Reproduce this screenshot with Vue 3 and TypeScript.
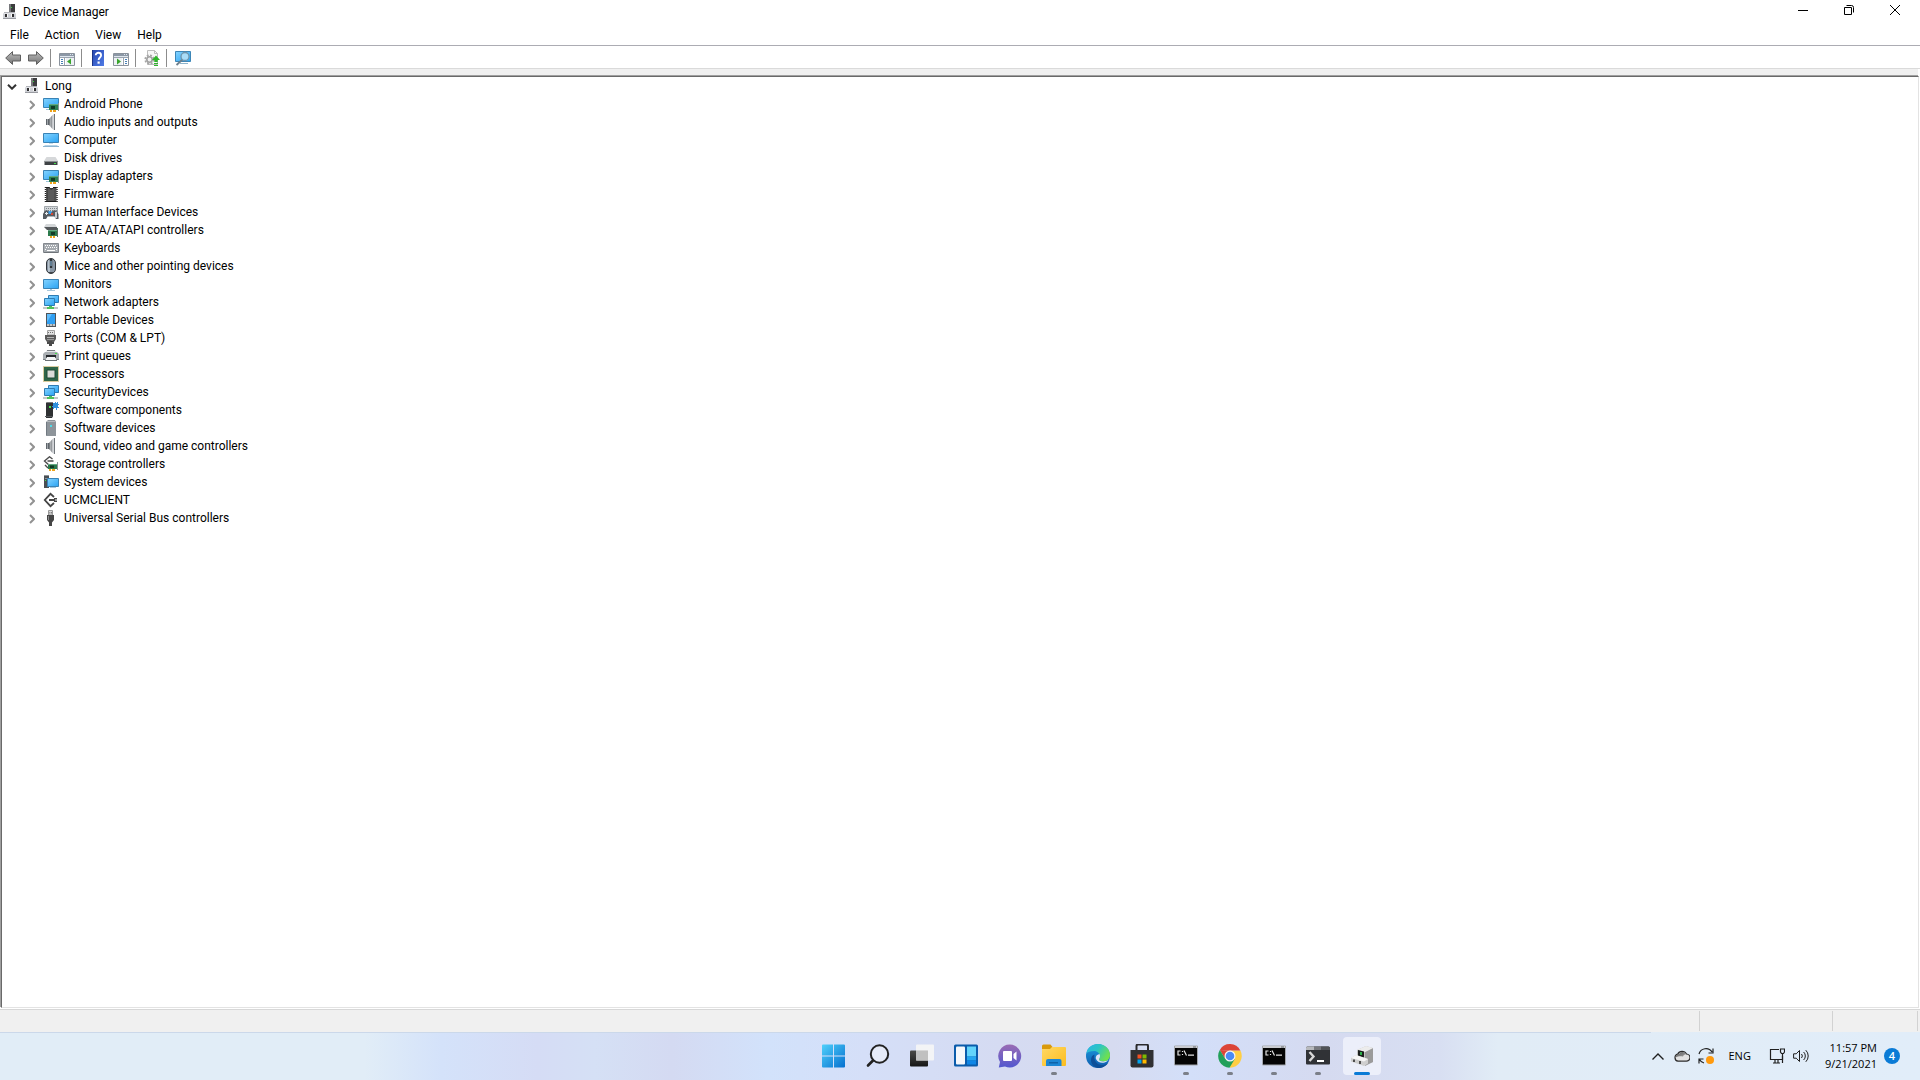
<script setup lang="ts">
interface Category {
  name: string
  icon: string
}

interface TaskItem {
  label: string
  icon: string
  running?: boolean
  active?: boolean
}

const menus: string[] = ['File', 'Action', 'View', 'Help']

const toolGroups: { label: string; icon: string }[][] = [
  [
    { label: 'Back', icon: 'back' },
    { label: 'Forward', icon: 'forward' },
  ],
  [{ label: 'Show/Hide Console Tree', icon: 'console-tree' }],
  [
    { label: 'Help', icon: 'help' },
    { label: 'Show/Hide Action Pane', icon: 'action-pane' },
  ],
  [{ label: 'Update device driver', icon: 'update' }],
  [{ label: 'Scan for hardware changes', icon: 'scan' }],
]

const categories: Category[] = [
  { name: 'Android Phone', icon: 'display' },
  { name: 'Audio inputs and outputs', icon: 'speaker' },
  { name: 'Computer', icon: 'computer' },
  { name: 'Disk drives', icon: 'disk' },
  { name: 'Display adapters', icon: 'display' },
  { name: 'Firmware', icon: 'firmware' },
  { name: 'Human Interface Devices', icon: 'hid' },
  { name: 'IDE ATA/ATAPI controllers', icon: 'ide' },
  { name: 'Keyboards', icon: 'keyboard' },
  { name: 'Mice and other pointing devices', icon: 'mouse' },
  { name: 'Monitors', icon: 'monitor' },
  { name: 'Network adapters', icon: 'network' },
  { name: 'Portable Devices', icon: 'portable' },
  { name: 'Ports (COM & LPT)', icon: 'port' },
  { name: 'Print queues', icon: 'printer' },
  { name: 'Processors', icon: 'cpu' },
  { name: 'SecurityDevices', icon: 'network' },
  { name: 'Software components', icon: 'component' },
  { name: 'Software devices', icon: 'softdev' },
  { name: 'Sound, video and game controllers', icon: 'speaker' },
  { name: 'Storage controllers', icon: 'storage' },
  { name: 'System devices', icon: 'system' },
  { name: 'UCMCLIENT', icon: 'ucm' },
  { name: 'Universal Serial Bus controllers', icon: 'usb' },
]

const tasks: TaskItem[] = [
  { label: 'Start', icon: 'start' },
  { label: 'Search', icon: 'search' },
  { label: 'Task View', icon: 'taskview' },
  { label: 'Widgets', icon: 'widgets' },
  { label: 'Chat', icon: 'chat' },
  { label: 'File Explorer', icon: 'explorer', running: true },
  { label: 'Microsoft Edge', icon: 'edge' },
  { label: 'Microsoft Store', icon: 'store' },
  { label: 'Command Prompt', icon: 'cmd', running: true },
  { label: 'Google Chrome', icon: 'chrome', running: true },
  { label: 'Command Prompt', icon: 'cmd', running: true },
  { label: 'Windows Terminal', icon: 'terminal', running: true },
  { label: 'Device Manager', icon: 'devmgr', running: true, active: true },
]
</script>

<template>
  <div class="screen">
    <svg class="sprites" width="0" height="0" aria-hidden="true">
      <defs>
        <linearGradient id="g-screen" x1="0" y1="0" x2="1" y2="1">
          <stop offset="0" stop-color="#84d3ff" />
          <stop offset="1" stop-color="#2aa3f3" />
        </linearGradient>
        <linearGradient id="g-grey" x1="0" y1="0" x2="1" y2="0">
          <stop offset="0" stop-color="#63676b" />
          <stop offset="0.5" stop-color="#b4b8bb" />
          <stop offset="1" stop-color="#6c7075" />
        </linearGradient>
        <linearGradient id="g-arrow" x1="0" y1="0" x2="0" y2="1">
          <stop offset="0" stop-color="#bcbcbc" />
          <stop offset="1" stop-color="#747474" />
        </linearGradient>
        <linearGradient id="g-help" x1="0" y1="0" x2="1" y2="1">
          <stop offset="0" stop-color="#2545ae" />
          <stop offset="1" stop-color="#4f7be6" />
        </linearGradient>
        <linearGradient id="g-start" x1="0" y1="0" x2="1" y2="1">
          <stop offset="0" stop-color="#4fd0fb" />
          <stop offset="1" stop-color="#0570cf" />
        </linearGradient>
        <linearGradient id="g-chat" x1="0" y1="0" x2="0" y2="1">
          <stop offset="0" stop-color="#9a6cb4" />
          <stop offset="1" stop-color="#5257cf" />
        </linearGradient>
        <linearGradient id="g-folder" x1="0" y1="0" x2="1" y2="1">
          <stop offset="0" stop-color="#ffd865" />
          <stop offset="1" stop-color="#fcbc1d" />
        </linearGradient>
        <linearGradient id="g-edge-top" x1="0" y1="0" x2="1" y2="0.5">
          <stop offset="0" stop-color="#2ab4e8" />
          <stop offset="0.5" stop-color="#2cc5c4" />
          <stop offset="1" stop-color="#6ee04f" />
        </linearGradient>
        <linearGradient id="g-edge-left" x1="0" y1="0" x2="0" y2="1">
          <stop offset="0" stop-color="#1c9de0" />
          <stop offset="1" stop-color="#0f5cae" />
        </linearGradient>
        <linearGradient id="g-view" x1="0" y1="0" x2="0" y2="1">
          <stop offset="0" stop-color="#4a4a48" />
          <stop offset="1" stop-color="#161616" />
        </linearGradient>
        <linearGradient id="g-cloud" x1="0" y1="0" x2="1" y2="1">
          <stop offset="0" stop-color="#5c5c5c" />
          <stop offset="1" stop-color="#a2a2a2" />
        </linearGradient>
      </defs>

      <symbol id="card" viewBox="0 0 16 16">
        <path d="M6 8h9v6H6z" fill="#2f8053" />
        <path d="M8 10h4v3H8z" fill="#123b27" />
        <path d="M6 8h9v1H6z" fill="#63a983" />
        <path d="M15 7h1v8h-1z" fill="#8a9494" />
        <path d="M7 14h2v2H7zM10 14h3v2h-3z" fill="#eda31b" />
      </symbol>

      <symbol id="devmgr16" viewBox="0 0 16 16">
        <path d="M7 0h6v9H7z" fill="#3c3c3e" />
        <path d="M7 0h2v8H7z" fill="#77787b" />
        <path d="M9 3h1v1H9z" fill="#34d03a" />
        <path d="M2 8h11v1H2z" fill="#b2b4b9" />
        <path d="M1 9h13v6H1z" fill="#cfd1d6" />
        <path d="M1 9h13v1H1z" fill="#e2e3e7" />
        <path d="M1 14h13v1H1z" fill="#9a9ca2" />
        <path d="M3 10h2v3H3zM10 10h2v3h-2z" fill="#2f2f31" />
        <path d="M5 10h1v3H5zM9 10h1v3H9z" fill="#fafafa" />
      </symbol>

      <symbol id="back" viewBox="0 0 16 16">
        <path d="M.7 8 7.500 1.600V5h8v6h-8v3.400z" fill="url(#g-arrow)" stroke="#5f5f5f" stroke-linejoin="round" />
      </symbol>
      <symbol id="forward" viewBox="0 0 16 16">
        <path d="M15.300 8 8.500 1.600V5h-8v6h8v3.400z" fill="url(#g-arrow)" stroke="#5f5f5f" stroke-linejoin="round" />
      </symbol>
      <symbol id="console-tree" viewBox="0 0 16 16">
        <path d="M.5 3.500h15v12H.5z" fill="#fff" stroke="#8a929c" />
        <path d="M1 4h14v2H1z" fill="#8c98a6" />
        <path d="M11 4h1v1h-1zM13 4h1v1h-1zM1 6h14v1H1z" fill="#dfe6ee" />
        <path d="M1 7h14v1H1zM5 8h1v7H5z" fill="#9aa4b0" />
        <path d="M2 9h2v1H2zM2 11h2v1H2zM2 13h2v1H2z" fill="#467fb5" />
        <path d="M7 8h8v7H7z" fill="#eef1f4" />
        <path d="M12 8.500v6L8 11.500z" fill="#38a52b" />
      </symbol>
      <symbol id="action-pane" viewBox="0 0 16 16">
        <path d="M.5 3.500h15v12H.5z" fill="#fff" stroke="#8a929c" />
        <path d="M1 4h14v2H1z" fill="#8c98a6" />
        <path d="M11 4h1v1h-1zM13 4h1v1h-1zM1 6h14v1H1z" fill="#dfe6ee" />
        <path d="M1 7h14v1H1zM10 8h1v7h-1z" fill="#9aa4b0" />
        <path d="M12 9h2v1h-2zM12 11h2v1h-2zM12 13h2v1h-2z" fill="#467fb5" />
        <path d="M1 8h8v7H1z" fill="#eef1f4" />
        <path d="M4 8.500v6l4-3z" fill="#38a52b" />
      </symbol>
      <symbol id="help" viewBox="0 0 16 16">
        <path d="M2 0h12v16H2z" fill="url(#g-help)" />
        <path d="M2 0h1v16H2z" fill="#1b3487" />
        <path d="M5.700 5.200c0-3.300 5.400-3.300 5.400 0 0 2.300-2.500 2.300-2.500 4.800" fill="none" stroke="#fff" stroke-width="1.800" />
        <path d="M7.500 11.500h2.200v2.200H7.500z" fill="#fff" />
      </symbol>
      <symbol id="update" viewBox="0 0 16 16">
        <path d="M3.500.5h7l3 3v11h-10z" fill="#f7f7f7" stroke="#bdbdbd" />
        <path d="M10.500.5v3h3" fill="none" stroke="#bdbdbd" />
        <circle cx="5.500" cy="9.500" r="4.300" fill="none" stroke="#a6a6a6" stroke-width="1.600" stroke-dasharray="2 1.380" />
        <circle cx="5.500" cy="9.500" r="2.700" fill="#f0f0f0" stroke="#a0a0a0" stroke-width="1.600" />
        <path d="M12 5.500 16 10h-2.300v2h-3.400v-2H8z" fill="#2fb52a" />
        <path d="M10 13h4v1h-4zM10 15h4v1h-4z" fill="#2fb52a" />
      </symbol>
      <symbol id="scan" viewBox="0 0 16 16">
        <path d="M.5 1.500h15v10H.5z" fill="url(#g-screen)" stroke="#3d86b7" />
        <path d="M5 13h8v1H5z" fill="#8fb4cc" />
        <path d="m7.500 9.500-6 5.500" stroke="#6d7f8c" stroke-width="1.800" />
        <circle cx="10" cy="6.500" r="4" fill="#a9dcf8" stroke="#6f95ad" stroke-width="1.300" />
      </symbol>

      <symbol id="display" viewBox="0 0 16 16">
        <path d="M.5 2.500h15v9H.5z" fill="url(#g-screen)" stroke="#3a83b5" />
        <path d="M3 13h4v1H3z" fill="#9cc4dc" />
        <use href="#card" />
      </symbol>
      <symbol id="speaker" viewBox="0 0 16 16">
        <path d="M3 5h3v6H3z" fill="#5f656b" />
        <path d="M4 5h1v6H4z" fill="#a0a5a9" />
        <path d="M6 5 9.500 1v14L6 11z" fill="url(#g-grey)" />
        <path d="M9.500 1 11 0v16l-1.500-1z" fill="#d3d6d9" />
        <path d="M11 0h1v16h-1z" fill="#6f757a" />
      </symbol>
      <symbol id="computer" viewBox="0 0 16 16">
        <path d="M.5 1.500h15v9H.5z" fill="url(#g-screen)" stroke="#3a83b5" />
        <path d="M6 11h4v1H6z" fill="#c5dcea" />
        <path d="M2 13h12l2 2H0z" fill="#b7d3e6" />
        <path d="M0 14h16v1H0z" fill="#8db5d0" />
      </symbol>
      <symbol id="disk" viewBox="0 0 16 16">
        <path d="M3.500 7h9L15 11H1z" fill="#d6d8da" />
        <path d="M1.500 11h13v4h-13z" fill="#3f4245" />
        <path d="M1.500 11h13v1h-13z" fill="#8b8f92" />
        <path d="M11 13h2v1h-2z" fill="#45e04b" />
      </symbol>
      <symbol id="firmware" viewBox="0 0 16 16">
        <path d="M3 1.500h10.500V15H3z" fill="#5a5a5a" />
        <path d="M4.500 2v13M12 2v13" stroke="#444" />
        <path d="M2.500 1v15M14 1v15" stroke="#222" stroke-width="1.500" stroke-dasharray="1 1" />
        <path d="M3 1.500h3.500c0 2 3.500 2 3.500 0h3.500M3 15.500h10.500" stroke="#1c1c1c" fill="none" />
        <path d="M7 .5h3v1.500H7z" fill="#fff" />
      </symbol>
      <symbol id="hid" viewBox="0 0 16 16">
        <path d="M1.500 2.500h13v8h-13z" fill="#d3d7da" stroke="#a2a7ab" />
        <path d="M3 4.500h11M3 6.500h11M3 8.500h11" stroke="#80868b" stroke-dasharray="1 1" />
        <path d="M0 15V10l2-3.500h3L6.500 8h2L10 6.500h3l2.500 3.500v5H13l-2-3H5l-2 3z" fill="#565b61" />
        <path d="M5 12h6v1H5z" fill="#aeb4b9" />
        <path d="M2 9h3v1H2zM3 8h1v3H3z" fill="#e7eaec" />
        <path d="M5.500 7h3v3h-3z" fill="#3d9ee8" />
        <path d="M8 9h2v2H8z" fill="#d9472f" />
        <path d="M12 8h2v6h-2z" fill="#c8ccd0" />
      </symbol>
      <symbol id="ide" viewBox="0 0 16 16">
        <path d="M3 2h9l2 3H1z" fill="#d4d7d9" />
        <path d="M1 5h13v3H4z" fill="#55595c" />
        <path d="M5 8h10v6H5z" fill="#2c7a4c" />
        <path d="M5 8h10v1H5z" fill="#63a983" />
        <path d="M8 10h4v3H8z" fill="#123b27" />
        <path d="M14 6h1v9h-1z" fill="#56705f" />
        <path d="M7 14h2v2H7zM10 14h2v2h-2z" fill="#eda31b" />
      </symbol>
      <symbol id="keyboard" viewBox="0 0 16 16">
        <path d="M.5 3.500h15v9H.5z" fill="#a6abb0" stroke="#83888e" />
        <path d="M2 5.500h12M3 7.500h11M2 9.500h1M13 9.500h1" stroke="#fff" stroke-dasharray="1 1" />
        <path d="M4 10h8v1H4z" fill="#fff" />
        <path d="M1 12h14v1H1z" fill="#6f7479" />
      </symbol>
      <symbol id="mouse" viewBox="0 0 16 16">
        <rect x="3.500" y=".5" width="9" height="15" rx="4.500" fill="#8996a4" stroke="#30353a" />
        <rect x="5" y="2" width="2" height="12" rx="1" fill="#b7c3ce" />
        <path d="M8 1v9" stroke="#30353a" stroke-width="2.400" />
        <path d="M7.500 3h1v5h-1z" fill="#8fc4ea" />
        <path d="M5 14.500h6" stroke="#41464b" />
      </symbol>
      <symbol id="monitor" viewBox="0 0 16 16">
        <path d="M.5 3.500h15v9H.5z" fill="url(#g-screen)" stroke="#3a83b5" />
        <path d="M7 13h2v1H7zM4 14h8v1H4z" fill="#a8c8dc" />
      </symbol>
      <symbol id="network" viewBox="0 0 16 16">
        <path d="M5.500 1.500h10v7h-10z" fill="url(#g-screen)" stroke="#2f7cb3" />
        <path d="M1.500 4.500h10v7h-10z" fill="url(#g-screen)" stroke="#2f7cb3" />
        <path d="M0 13h15v2H0z" fill="#c3c8c8" />
        <path d="M6 12h3v1h2v2H4v-2h2z" fill="#4fc15a" />
      </symbol>
      <symbol id="portable" viewBox="0 0 16 16">
        <path d="M3 1h10v14H3z" fill="#4f5458" />
        <path d="M4 2h8v10H4z" fill="#2f9ff2" />
        <path d="M4 2h5l-5 8z" fill="#62bdfb" />
        <path d="M4 12h8v2H4z" fill="#c1c5c8" />
        <path d="M6.500 12v2M9.500 12v2" stroke="#7d8387" />
      </symbol>
      <symbol id="port" viewBox="0 0 16 16">
        <path d="M4.500.5h7V5h-7z" fill="#e4e4e4" stroke="#a2a2a2" />
        <path d="M5 2.500h6" stroke="#707070" stroke-dasharray="1 1" />
        <path d="M2 5h11v4l-2 3H4L2 9z" fill="#5b5b5b" />
        <path d="M4 7h7v1H4z" fill="#b0b0b0" />
        <path d="M4 9h7v1H4z" fill="#969696" />
        <path d="M4 12h2v2H4zM9 12h2v2H9zM6 11h3v5H6z" fill="#4a4a4a" />
      </symbol>
      <symbol id="printer" viewBox="0 0 16 16">
        <path d="M4 2h8l2 3H2z" fill="#e4e6e8" />
        <path d="M4 2h8v1H4z" fill="#777c80" />
        <path d="M0 6 2 4h12l2 2v6H0z" fill="#a9aeb2" />
        <path d="M0 11h16v1H0z" fill="#7b8084" />
        <path d="M3 7h10v3H3z" fill="#24282b" />
        <path d="M4 9h8l2 4H2z" fill="#f4f5f6" />
        <path d="M2 12h12v1H2z" fill="#6b7074" />
        <path d="M12 5h2v1h-2z" fill="#45e04b" />
      </symbol>
      <symbol id="cpu" viewBox="0 0 16 16">
        <path d="M.5.5h15v15H.5z" fill="none" stroke="#b0973f" stroke-dasharray="1 1" />
        <path d="M1 1h14v14H1z" fill="#2f6548" />
        <path d="M4 4h8v8H4z" fill="#dcdcd8" stroke="#1f4a34" />
      </symbol>
      <symbol id="component" viewBox="0 0 16 16">
        <path d="M3 1 4 0h6v14l-1 2H3z" fill="#2f3133" />
        <path d="M4 0h6v1H4z" fill="#77797b" />
        <path d="M2 14h8v1H2z" fill="#55585b" />
        <path d="M6 4h2v2H6z" fill="#45e04b" />
        <path d="M10 1h2V0h1v1h1V0h1v2h1v1h-1v2h1v1h-2v2h-1V6h-2v1h-1V5H9V4h1z" fill="#2f8fdc" />
      </symbol>
      <symbol id="softdev" viewBox="0 0 16 16">
        <path d="M3 2 5 0h7l1 2v14H3z" fill="#8d949a" />
        <path d="M4 1h8v1H4z" fill="#b6bbbf" />
        <path d="M3 2h1v13H3z" fill="#717981" />
        <path d="M7 5h2v2H7z" fill="#4ddbe8" />
      </symbol>
      <symbol id="storage" viewBox="0 0 16 16">
        <path d="M9.500 3 6.500.8 1.500 5l5 4.500M4.500 5h6M2 9l3 3" fill="none" stroke="#4c4c4c" stroke-width="1.400" />
        <path d="M5 8h9v5H5z" fill="#2c7a4c" />
        <path d="M5 8h9v1H5z" fill="#63a983" />
        <path d="M7 9.500h4V12H7z" fill="#123b27" />
        <path d="M14 6h1v8h-1z" fill="#8a9494" />
        <path d="M6 13h2v2H6zM9 13h3v2H9z" fill="#eda31b" />
      </symbol>
      <symbol id="system" viewBox="0 0 16 16">
        <path d="M1 1h5v13H1z" fill="#4a4e52" />
        <path d="M1 1h5v1H1zM2 4h3v1H2z" fill="#8d9296" />
        <path d="M2 6h1v1H2z" fill="#45e04b" />
        <path d="M4.500 4.500h11v8h-11z" fill="url(#g-screen)" stroke="#3a83b5" />
        <path d="M7 13h6v1H7z" fill="#a8c8dc" />
      </symbol>
      <symbol id="ucm" viewBox="0 0 16 16">
        <path d="M11 5 7.500 1.800 1.800 8l5.700 6.200L11 11M6 8h6" fill="none" stroke="#454545" stroke-width="1.800" />
        <path d="M11 6h3v4h-3z" fill="#454545" />
        <path d="M12 7.500h2v1h-2z" fill="#fff" />
      </symbol>
      <symbol id="usb" viewBox="0 0 16 16">
        <path d="M5.500.5h4V5h-4z" fill="#d9d9d9" stroke="#999" />
        <path d="M6.500 2h.8v1.500h-.8zM8 2h.8v1.500H8z" fill="#666" />
        <path d="M4 5h7v5l-2 2.500V16H6v-3.500L4 10z" fill="#454545" />
        <path d="M5 6h1v4H5z" fill="#8a8a8a" />
      </symbol>

      <symbol id="start" viewBox="0 0 24 24">
        <path d="M0 1.500Q0 .5 1 .5h10v11H0zM12 .5h10q1 0 1 1v10H12zM0 12.500h11v11H1q-1 0-1-1zM12 12.500h11v10q0 1-1 1H12z" fill="url(#g-start)" />
      </symbol>
      <symbol id="search" viewBox="0 0 24 24">
        <circle cx="13.500" cy="10" r="8.700" fill="#e6ebf8" stroke="#222" stroke-width="2" />
        <path d="m7 16.500-5 5" stroke="#222" stroke-width="2.600" stroke-linecap="round" />
      </symbol>
      <symbol id="taskview" viewBox="0 0 24 24">
        <rect x="0" y="6.500" width="18" height="16" rx="1" fill="url(#g-view)" />
        <rect x="6" y=".5" width="18" height="16" rx="1" fill="#f6f6f6" fill-opacity=".9" />
        <path d="M6 6.500h12v10H6z" fill="#c0c0c0" />
      </symbol>
      <symbol id="widgets" viewBox="0 0 24 24">
        <rect x="0" y=".5" width="24" height="22" rx="1.500" fill="#0b5cab" />
        <rect x="2" y="2.500" width="9" height="18" rx="1" fill="#f6f8fb" />
        <path d="M13 2.500h9v10h-9z" fill="#63d4fb" />
        <path d="M13 12.500h9v4h-9z" fill="#24a6f1" />
        <path d="M13 16.500h9v4h-9z" fill="#0f86e6" />
      </symbol>
      <symbol id="chat" viewBox="0 0 24 24">
        <path d="M12 .5a11.500 11.500 0 1 1-5 22L.8 23.500 2 18A11.500 11.500 0 0 1 12 .5z" fill="url(#g-chat)" />
        <rect x="5" y="7" width="9" height="10" rx="1" fill="#fff" />
        <path d="m15.500 10 3-2.500v9l-3-2.500z" fill="#fff" />
      </symbol>
      <symbol id="explorer" viewBox="0 0 24 24">
        <path d="M0 2q0-1.500 1.500-1.500h7L10.500 3v4H0z" fill="#d99a0c" />
        <path d="M0 5h8l2-2h13q1 0 1 1v17q0 1-1 1H1q-1 0-1-1z" fill="url(#g-folder)" />
        <path d="M4 22v-5q0-2 2-2h11.500q2 0 2 2v5z" fill="#1c86d4" />
        <path d="M7 18h9v1.500H7z" fill="#0f62a9" />
      </symbol>
      <symbol id="edge" viewBox="0 0 24 24">
        <circle cx="12" cy="12" r="12" fill="url(#g-edge-left)" />
        <path d="M.3 9.500C1.500 3.500 6 0 12 0c7 0 12 5 12 11 0 4-3 6.500-6.500 6.500-3 0-4.500-1-4.500-2 0-.8 1-1.300 1-3C14 9.500 11.500 7 8 7 4.500 7 1.500 8 .3 9.500z" fill="url(#g-edge-top)" />
        <path d="M8.500 10.500C7 16 11 21 16 21c3 0 5-1 6.500-2.500C20.500 22 16.500 24 12 24c-4-1-7-4-7-8 0-3 1.500-5 3.500-5.500z" fill="#0e4f98" />
        <path d="M13.800 10.200c-3 0-4.600 2.300-3.800 4.800 1 3 5 4.500 8.500 3.500 2-.5 3.500-1.500 4.300-2.700-3.500 2.500-9.800 2-9.800-.3 0-.8 1-1.300 1-3 0-1-.1-1.600-.2-2.300z" fill="#dde5f5" />
      </symbol>
      <symbol id="store" viewBox="0 0 24 24">
        <path d="M6.500 7V2q0-1.500 1.500-1.500h8.500Q18 .5 18 2v5" fill="none" stroke="#2a2a2c" stroke-width="2" />
        <path d="M.5 6h23v15.500q0 2-2 2h-19q-2 0-2-2z" fill="#303032" />
        <path d="M7.500 10.500h4v4h-4z" fill="#f25022" />
        <path d="M12.500 10.500h4v4h-4z" fill="#7fba00" />
        <path d="M7.500 15.500h4v4h-4z" fill="#00a4ef" />
        <path d="M12.500 15.500h4v4h-4z" fill="#ffb900" />
      </symbol>
      <symbol id="cmd" viewBox="0 0 24 24">
        <path d="M.5 2h23v19H.5z" fill="#050505" stroke="#a5a8ae" />
        <path d="M1 2h22v2H1z" fill="#c9cbd0" />
        <path d="M19 2.500h3v1h-3z" fill="#65686e" />
        <path d="M6.500 7H4v4h2.500M8.500 7v1M8.500 10v1M10 6.500l2.500 5M14 11.200h6" fill="none" stroke="#e4e4e4" stroke-width="1.200" />
      </symbol>
      <symbol id="chrome" viewBox="0 0 24 24">
        <path d="M12 12V6.500h10.400A11.700 11.700 0 0 1 12 23.700z" fill="#ffce43" />
        <path d="M1.800 6 12 6.500h10.400A11.700 11.700 0 0 0 1.800 6z" fill="#dc4437" />
        <path d="m1.800 6 5.400 9L12 6.500z" fill="#dc4437" />
        <path d="M7.200 14.800 1.800 6A11.700 11.700 0 0 0 11.500 23.700L16.800 15z" fill="#22a05a" />
        <circle cx="12" cy="12" r="5.500" fill="#f5f5f5" />
        <circle cx="12" cy="12" r="4.300" fill="#4a8af4" />
      </symbol>
      <symbol id="terminal" viewBox="0 0 24 24">
        <path d="M0 4q0-1.500 1.500-1.500h21Q24 2.500 24 4v15.500q0 1-1 1H1q-1 0-1-1z" fill="#303236" />
        <path d="M0 6V4q0-1.500 1.500-1.500H8V6z" fill="#b7b9bd" />
        <path d="M8 2.500h7V6H8z" fill="#77797e" />
        <path d="M15 2.500h7.500Q24 2.500 24 4v2h-9z" fill="#515358" />
        <path d="m3.500 8 4 4.500-4 4.500" fill="none" stroke="#d8d8d8" stroke-width="2.400" />
        <path d="M11 16h7v2h-7z" fill="#fff" />
      </symbol>
      <symbol id="devmgr" viewBox="0 0 24 24">
        <path d="m7 6 9-4 7 2v14l-8 3-8-5z" fill="#c4c4c4" />
        <path d="m15 8 8-4v14l-8 4z" fill="#9b9b9b" />
        <path d="m7 6 9-4 7 2-8 4z" fill="#ececec" />
        <path d="m8 6 6 1.500v7L8 13z" fill="#1b1f1c" />
        <path d="M10 8h2v3h-2z" fill="#2eb04a" />
        <path d="m1 14 5-3 12 4v4.500L14 22 1 17.500z" fill="#cfcfcf" />
        <path d="m1 14 5-3 12 4-4 2.500z" fill="#f6f6f6" />
        <path d="M3 15.500h2V18H3zM9 17h2v3H9z" fill="#4e4e4e" />
      </symbol>

      <symbol id="tray-cloud" viewBox="0 0 16 16">
        <path d="M4 13.200a3.600 3.600 0 0 1-.4-7A5 5 0 0 1 12.500 6a3.600 3.600 0 0 1-.3 7.200z" fill="#e2e2e2" stroke="#2b2b2b" stroke-width="1.200" />
        <path d="M1.200 9.500C2 6.500 4 6.300 5 6c2-2.900 6-2.600 7 .3-1.500.2-2.500.9-3 2.200-2.500-.6-4.700-.3-7.800 1z" fill="url(#g-cloud)" />
      </symbol>
      <symbol id="tray-sync" viewBox="0 0 16 16">
        <path d="M1 6A7.200 7.200 0 0 1 14 4M15 .5V5h-4.500M6 15A7 7 0 0 1 1.500 11.500M1 15.500V11h4.500" fill="none" stroke="#222" stroke-width="1.200" />
        <circle cx="12" cy="12" r="4" fill="#ff9a0d" />
      </symbol>
      <symbol id="tray-net" viewBox="0 0 16 16">
        <path d="M10 1.500H1.500v10h12V8M4 15h7M6 11.500V15M9 11.500V15" fill="none" stroke="#1f1f1f" stroke-width="1.200" />
        <path d="M11.500 1h4v3l-1 1.500h-2l-1-1.500zM13.500 5.500V15" fill="none" stroke="#1f1f1f" stroke-width="1.200" />
      </symbol>
      <symbol id="tray-sound" viewBox="0 0 16 16">
        <path d="M.6 5.800h2.600l3.300-3.300v11L3.200 10.200H.6z" fill="none" stroke="#1f1f1f" />
        <path d="M8.500 6a3 3 0 0 1 0 4M10.600 4a5.500 5.500 0 0 1 0 8M12.800 2.200a8.200 8.200 0 0 1 0 11.600" fill="none" stroke="#1f1f1f" />
      </symbol>
    </svg>

    <main class="window">
      <header class="titlebar">
        <svg class="icon" viewBox="0 0 16 16" aria-hidden="true"><use href="#devmgr16" /></svg>
        <h1 class="title">Device Manager</h1>
        <div class="controls">
          <button type="button" aria-label="Minimize">
            <svg width="10" height="10" viewBox="0 0 10 10"><path d="M0 5.500h10" /></svg>
          </button>
          <button type="button" aria-label="Restore">
            <svg width="10" height="10" viewBox="0 0 10 10">
              <path d="M.5 2.500h7v7h-7zM2.500.5h5q2 0 2 2v5" />
            </svg>
          </button>
          <button type="button" aria-label="Close">
            <svg width="10" height="10" viewBox="0 0 10 10"><path d="m0 0 10 10M10 0 0 10" /></svg>
          </button>
        </div>
      </header>

      <nav class="menubar" aria-label="Menu">
        <button v-for="menu in menus" :key="menu" type="button">{{ menu }}</button>
      </nav>

      <div class="toolbar" role="toolbar" aria-label="Standard">
        <div v-for="(group, i) in toolGroups" :key="i" class="tool-group">
          <button v-for="tool in group" :key="tool.icon" type="button" :aria-label="tool.label">
            <svg class="icon" viewBox="0 0 16 16"><use :href="'#' + tool.icon" /></svg>
          </button>
        </div>
      </div>

      <section class="tree" aria-label="Devices">
        <div class="row root">
          <button class="toggle" type="button" aria-label="Collapse Long">
            <svg width="10" height="6" viewBox="0 0 10 6"><path d="m1 .7 4 4 4-4" /></svg>
          </button>
          <svg class="icon" viewBox="0 0 16 16" aria-hidden="true"><use href="#devmgr16" /></svg>
          <span>Long</span>
        </div>
        <ul>
          <li v-for="item in categories" :key="item.name" class="row">
            <button class="toggle" type="button" :aria-label="'Expand ' + item.name">
              <svg width="6" height="10" viewBox="0 0 6 10"><path d="m1 1 4 4-4 4" /></svg>
            </button>
            <svg class="icon" viewBox="0 0 16 16" aria-hidden="true"><use :href="'#' + item.icon" /></svg>
            <span>{{ item.name }}</span>
          </li>
        </ul>
      </section>

      <footer class="statusbar">
        <div class="pane main-pane"></div>
        <div class="pane wide-pane"></div>
        <div class="pane end-pane"></div>
      </footer>
    </main>

    <footer class="taskbar">
      <div class="lead"></div>
      <nav class="apps" aria-label="Taskbar">
        <button
          v-for="(task, i) in tasks"
          :key="i"
          type="button"
          :aria-label="task.label"
          :class="{ running: task.running, active: task.active }"
        >
          <svg width="24" height="24" viewBox="0 0 24 24"><use :href="'#' + task.icon" /></svg>
        </button>
      </nav>
      <div class="tray">
        <button class="overflow" type="button" aria-label="Show hidden icons">
          <svg width="12" height="7" viewBox="0 0 12 7">
            <path d="m.5 6.500 5.500-5.500 5.500 5.500" fill="none" stroke="#1f1f1f" stroke-width="1.400" />
          </svg>
        </button>
        <button type="button" aria-label="OneDrive">
          <svg class="icon" viewBox="0 0 16 16"><use href="#tray-cloud" /></svg>
        </button>
        <button type="button" aria-label="Updates">
          <svg class="icon" viewBox="0 0 16 16"><use href="#tray-sync" /></svg>
        </button>
        <button class="lang" type="button">ENG</button>
        <button class="quick" type="button" aria-label="Network and volume">
          <svg class="icon" viewBox="0 0 16 16"><use href="#tray-net" /></svg>
          <svg class="icon" viewBox="0 0 16 16"><use href="#tray-sound" /></svg>
        </button>
        <button class="clock" type="button">
          <span class="time"><span>11:57 PM</span><span>9/21/2021</span></span>
          <span class="badge">4</span>
        </button>
      </div>
    </footer>
  </div>
</template>

<style>
body {
  margin: 0;
}
</style>

<style scoped>
.screen {
  display: flex;
  flex-direction: column;
  min-height: 100vh;
  background: #fff;
  color: #000;
  font-family: Roboto, 'Open Sans', sans-serif;
  font-size: 12px;
  line-height: 18px;
}

.sprites {
  position: absolute;
}

button {
  display: flex;
  align-items: center;
  justify-content: center;
  margin: 0;
  padding: 0;
  border: 0;
  background: none;
  color: inherit;
  font: inherit;
}

svg {
  display: block;
  flex: none;
}

.icon {
  width: 16px;
  height: 16px;
}

.window {
  display: flex;
  flex: 1;
  flex-direction: column;
}

.titlebar {
  display: flex;
  align-items: center;
  gap: 5px;
  height: 24px;
  padding: 0 2px;
}

.title {
  flex: 1;
  margin: 0;
  font-size: 12px;
  font-weight: 400;
}

.controls {
  display: flex;
  align-self: flex-start;
}

.controls button {
  width: 46px;
  height: 20px;
}

.controls path {
  fill: none;
  stroke: #000;
}

.menubar {
  display: flex;
  gap: 16px;
  height: 21px;
  padding-left: 10px;
  border-bottom: 1px solid #acacb3;
}

.toolbar {
  display: flex;
  height: 19px;
  padding-top: 3px;
  padding-left: 5px;
  border-bottom: 1px solid #dadada;
}

.tool-group {
  display: flex;
  gap: 7px;
  height: 18px;
}

.tool-group + .tool-group {
  margin-left: 6px;
  padding-left: 8px;
  border-left: 1px solid #8c8c8c;
}

.tree {
  flex: 1;
  margin: 7px 1px 0;
  border: 1px solid #e3e3e3;
  border-top-color: #696969;
  border-left-color: #696969;
  box-shadow: -1px -1px 0 #a0a0a0, -1px -7px 0 #f0f0f0;
}

.tree ul {
  margin: 0;
  padding: 0;
  list-style: none;
}

.row {
  display: flex;
  align-items: center;
  height: 18px;
  padding-left: 25px;
}

.row.root {
  padding-left: 4px;
}

.toggle {
  width: 9px;
  height: 18px;
  padding-top: 2px;
  margin-right: 7px;
}

.toggle path {
  fill: none;
  stroke: #929292;
  stroke-width: 2;
}

.root .toggle {
  width: 12px;
  margin-right: 6px;
}

.root .toggle path {
  stroke: #333;
}

.row > .icon {
  margin-right: 5px;
}

.statusbar {
  display: flex;
  height: 20px;
  margin-top: 1px;
  padding: 1px 2px 1px 0;
  border-top: 1px solid #d7d7d7;
  background: #f0f0f0;
}

.pane {
  box-sizing: border-box;
  border-right: 1px solid #d2d2d2;
}

.main-pane {
  flex: 1;
}

.wide-pane {
  width: 133px;
}

.end-pane {
  width: 85px;
}

.taskbar {
  display: flex;
  height: 48px;
  background:
    linear-gradient(#cbd8ea, #cbd8ea) 0 0 / 86% 1px no-repeat,
    linear-gradient(
      90deg,
      #e1edf7 0%,
      #e1edf7 19%,
      #d4e2fa 23%,
      #d5dcf5 28%,
      #d5e0f5 31%,
      #d4daf2 35%,
      #d2e2fb 40%,
      #d5dff8 45%,
      #d5dbf2 52%,
      #d6dbf0 58%,
      #d3dff9 62%,
      #d5daf0 69%,
      #d8dff2 75%,
      #e1ecf6 78%,
      #e1edf9 100%
    );
}

.lead {
  flex: 203 1 0;
}

.apps {
  display: flex;
  gap: 6px;
  padding: 5px 3px;
}

.apps button {
  position: relative;
  width: 38px;
  height: 38px;
  border-radius: 4px;
}

.apps .running::after {
  position: absolute;
  bottom: 0;
  left: 16px;
  width: 6px;
  height: 3px;
  border-radius: 2px;
  background: #7b7f88;
  content: '';
}

.apps .active {
  background: #eceffa;
}

.apps .active::after {
  left: 11px;
  width: 16px;
  background: #0a7bd6;
}

.tray {
  display: flex;
  flex: 129 1 0;
  align-items: center;
  justify-content: flex-end;
  gap: 8px;
  padding-right: 20px;
  font-family: 'Open Sans', 'Noto Sans', sans-serif;
  font-size: 11px;
  line-height: 16px;
}

.overflow {
  padding-right: 2px;
}

.lang {
  padding: 0 10px 0 6px;
}

.quick {
  gap: 8px;
  padding: 0 8px 0 0;
}

.clock {
  gap: 7px;
}

.time {
  display: flex;
  flex-direction: column;
  text-align: right;
}

.badge {
  width: 16px;
  height: 16px;
  border-radius: 8px;
  background: #0a7bd6;
  color: #fff;
  font-weight: 600;
  text-align: center;
}
</style>
